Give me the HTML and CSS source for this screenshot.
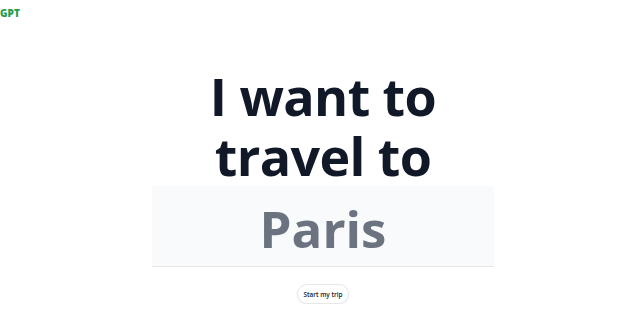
FILE: index.html
```html
<!DOCTYPE html>
<html lang="en">
<head>
<meta charset="utf-8">
<title>TripGPT</title>
<link rel="stylesheet" href="styles.css">
</head>
<body>
<header class="topbar">
  <span class="logo">GPT</span>
</header>
<main class="hero">
  <h1 class="title">I want to<br>travel to</h1>
  <div class="destination">
    <span class="dest-text">Paris</span>
  </div>
  <button class="start-btn" type="button">Start my trip</button>
</main>
</body>
</html>
```

FILE: styles.css
```css
html, body {
  margin: 0;
  padding: 0;
  background: #ffffff;
  font-family: "Open Sans", "Noto Sans", sans-serif;
}
.topbar {
  height: 24px;
  padding: 6px 0 0 0;
  box-sizing: border-box;
}
.logo {
  display: block;
  color: #1f9d48;
  font-weight: 800;
  font-size: 10px;
  line-height: 14px;
  letter-spacing: 0.1px;
}
.hero {
  display: flex;
  flex-direction: column;
  align-items: center;
  padding-left: 6px;
  padding-top: 42px;
}
.title {
  margin: 0;
  text-align: center;
  color: #111827;
  font-weight: 700;
  font-size: 52px;
  line-height: 60px;
  letter-spacing: -0.6px;
}
.destination {
  width: 342px;
  height: 81px;
  box-sizing: border-box;
  background: #f9fafb;
  border-bottom: 1px solid #e5e7eb;
  display: flex;
  align-items: center;
  justify-content: center;
  padding-top: 4px;
}
.dest-text {
  color: #6b7280;
  font-weight: 700;
  font-size: 51px;
  line-height: 60px;
}
.start-btn {
  margin-top: 17px;
  height: 20px;
  padding: 0 6px;
  border: 1px solid #e5e7eb;
  border-radius: 10px;
  background: #ffffff;
  box-shadow: 0 1px 2px rgba(0,0,0,0.06);
  font-family: "Open Sans", "Noto Sans", sans-serif;
  font-size: 6.4px;
  font-weight: 600;
  color: #111827;
}
```
